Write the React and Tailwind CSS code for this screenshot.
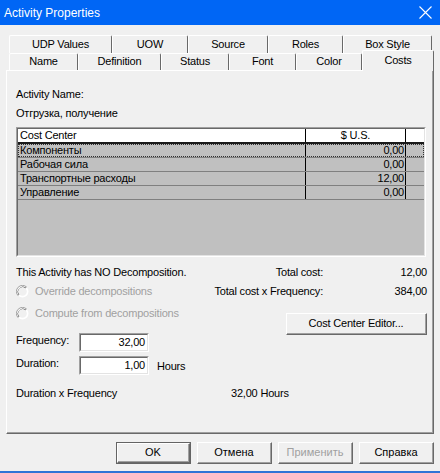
const FONT = { fontFamily: '"Liberation Sans", Arial, sans-serif' }

function Tab({ label, w }) {
  return (
    <div
      className={`${w} h-full flex items-center justify-center rounded-t-[2px] border-t border-l border-r border-t-white border-l-white border-r-[#696969] bg-[#f0f0f0] text-[11px] tracking-[-0.2px] text-black`}
    >
      <span className="-mt-[1px]">{label}</span>
    </div>
  )
}

function Btn({ children, w, def, disabled }) {
  return (
    <div className={`${w} h-[22px] ${def ? 'border border-[#646464]' : ''}`}>
      <div className="h-full w-full border border-t-white border-l-white border-r-[#696969] border-b-[#696969] bg-[#f0f0f0]">
        <div
          className={`h-full w-full flex items-center justify-center border-r border-b border-r-[#a0a0a0] border-b-[#a0a0a0] text-[11px] ${
            disabled ? 'text-[#a0a0a0]' : 'text-black'
          }`}
        >
          {children}
        </div>
      </div>
    </div>
  )
}

function Radio({ label }) {
  return (
    <div className="h-[19px] flex items-center">
      <svg width="13" height="13" viewBox="0 0 13 13" className="shrink-0">
        <circle cx="6.5" cy="6.5" r="6" fill="#ffffff" />
        <path d="M2.2 10.8 A6 6 0 0 1 10.8 2.2" fill="none" stroke="#a0a0a0" strokeWidth="1" />
        <path d="M3 10 A5 5 0 0 1 10 3" fill="none" stroke="#696969" strokeWidth="1" />
        <circle cx="6.5" cy="6.5" r="4.3" fill="#f0f0f0" />
      </svg>
      <span className="ml-[6px] text-[11px] text-[#a0a0a0]">{label}</span>
    </div>
  )
}

function NumInput({ value }) {
  return (
    <div className="w-[70px] h-[19px] border border-t-[#a0a0a0] border-l-[#a0a0a0] border-r-white border-b-white">
      <div className="h-full w-full border border-t-[#696969] border-l-[#696969] border-r-[#e3e3e3] border-b-[#e3e3e3] bg-white flex items-center justify-end pr-[2px] text-[11px] text-black">
        {value}
      </div>
    </div>
  )
}

const rows = [
  ['Компоненты', '0,00'],
  ['Рабочая сила', '0,00'],
  ['Транспортные расходы', '12,00'],
  ['Управление', '0,00'],
]

function CostTable() {
  return (
    <div className="mt-[7px] w-[410px] h-[130px] border border-t-[#a0a0a0] border-l-[#a0a0a0] border-r-white border-b-white">
      <div className="h-full w-full border border-t-[#696969] border-l-[#696969] border-r-[#e3e3e3] border-b-[#e3e3e3] bg-[#c0c0c0] flex flex-col">
        <div className="h-[15px] flex bg-white border-b-2 border-b-[#1a1a1a] text-[11px] leading-[13px]">
          <div className="w-[288px] pl-[2px] border-r border-black">Cost Center</div>
          <div className="w-[100px] text-center border-r border-black">$ U.S.</div>
          <div className="flex-1" />
        </div>
        {rows.map(([name, val], i) => (
          <div key={name} className="h-[14px] flex border-b border-b-[#808080] text-[11px] leading-[13px] text-black relative">
            <div className="w-[288px] pl-[2px] border-r border-black">{name}</div>
            <div className="w-[100px] text-right pr-[1px] border-r border-black">{val}</div>
            <div className="flex-1" />
            {i === 0 && <div className="absolute inset-0 border border-dotted border-[#303030] pointer-events-none" />}
          </div>
        ))}
      </div>
    </div>
  )
}

export default function App() {
  return (
    <div className="w-[440px] h-[473px] bg-[#f0f0f0] flex flex-col overflow-hidden text-black" style={FONT}>
      <div className="h-[25px] shrink-0 bg-[#0066f5] flex items-center justify-between pl-[4px] pr-[8px]">
        <span className="text-[12px] text-white">Activity Properties</span>
        <svg width="13" height="13" viewBox="0 0 13 13">
          <path d="M0.5 0.5 L12.5 12.5 M12.5 0.5 L0.5 12.5" stroke="#ffffff" strokeWidth="1.1" />
        </svg>
      </div>

      <div className="mt-[10px] h-[18px] pl-[9px] flex">
        <Tab label="UDP Values" w="w-[103px]" />
        <Tab label="UOW" w="w-[76px]" />
        <Tab label="Source" w="w-[80px]" />
        <Tab label="Roles" w="w-[75px]" />
        <Tab label="Box Style" w="w-[89px]" />
      </div>
      <div className="h-[17px] pl-[9px] flex items-end">
        <Tab label="Name" w="w-[69px]" />
        <Tab label="Definition" w="w-[83px]" />
        <Tab label="Status" w="w-[68px]" />
        <Tab label="Font" w="w-[67px]" />
        <Tab label="Color" w="w-[66px]" />
        <div className="relative z-10 w-[72px] h-[21px] -mb-[1px] flex items-start justify-center pt-[3px] rounded-t-[2px] border-t border-l border-r border-t-white border-l-white border-r-[#696969] bg-[#f0f0f0] text-[11px] tracking-[-0.2px] leading-[13px]">
          Costs
        </div>
      </div>

      <div className="ml-[6px] w-[428px] h-[364px] shrink-0 border border-t-white border-l-white border-r-[#696969] border-b-[#696969]">
        <div className="h-full w-full border-r border-b border-r-[#a0a0a0] border-b-[#a0a0a0] pl-[9px] pr-[5px] pt-[17px] text-[11px] tracking-[-0.2px]">
          <div className="leading-[13px]">Activity Name:</div>
          <div className="mt-[6px] leading-[13px]">Отгрузка, получение</div>
          <CostTable />

          <div className="mt-[6px] flex">
            <div className="w-[184px] flex flex-col">
              <div className="h-[19px] flex items-center">This Activity has NO Decomposition.</div>
              <Radio label="Override decompositions" />
              <div className="mt-[3px]">
                <Radio label="Compute from decompositions" />
              </div>
              <div className="mt-[10px] h-[19px] flex items-center">
                <span className="w-[63px] -mt-[4px]">Frequency:</span>
                <NumInput value="32,00" />
              </div>
              <div className="mt-[4px] h-[19px] flex items-center">
                <span className="w-[63px] -mt-[5px]">Duration:</span>
                <NumInput value="1,00" />
                <span className="ml-[8px] mt-[2px]">Hours</span>
              </div>
            </div>
            <div className="flex-1 flex flex-col">
              <div className="h-[19px] flex items-center">
                <span className="w-[123px] text-right">Total cost:</span>
                <span className="flex-1 text-right">12,00</span>
              </div>
              <div className="h-[19px] flex items-center">
                <span className="w-[123px] text-right">Total cost x Frequency:</span>
                <span className="flex-1 text-right">384,00</span>
              </div>
              <div className="mt-[12px] flex justify-end">
                <Btn w="w-[141px]">Cost Center Editor...</Btn>
              </div>
            </div>
          </div>

          <div className="mt-[12px] h-[13px] flex items-center">
            <span className="w-[215px]">Duration x Frequency</span>
            <span>32,00 Hours</span>
          </div>
        </div>
      </div>

      <div className="mt-[8px] flex pl-[116px] gap-[6px]">
        <Btn w="w-[75px]" def>
          OK
        </Btn>
        <Btn w="w-[75px]">Отмена</Btn>
        <Btn w="w-[75px]" disabled>
          Применить
        </Btn>
        <Btn w="w-[75px]">Справка</Btn>
      </div>

      <div className="mt-auto h-[2px] bg-[#2f74d6]" />
    </div>
  )
}
